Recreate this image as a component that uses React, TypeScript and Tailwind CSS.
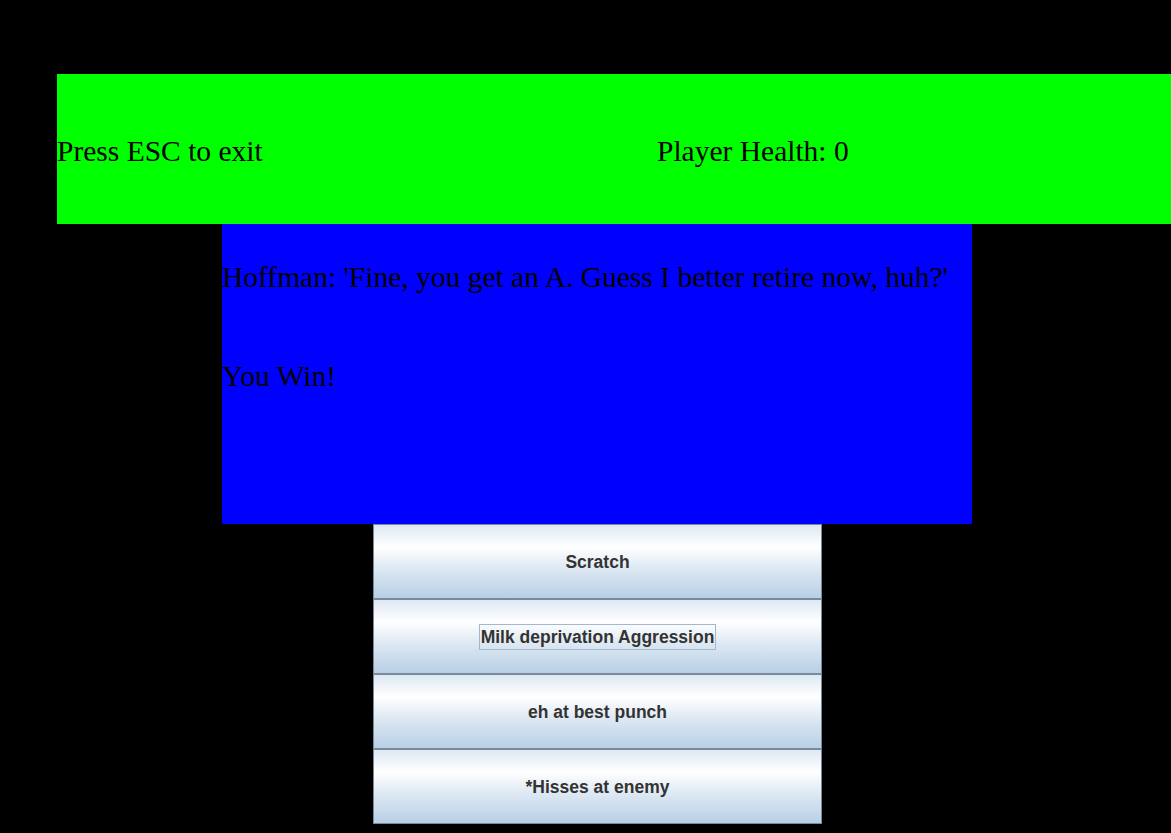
import React from 'react';

const moves = ['Scratch', 'Milk deprivation Aggression', 'eh at best punch', '*Hisses at enemy'];

function MoveButton({ label, focused }: { label: string; focused?: boolean }) {
  return (
    <button
      className="h-[75px] w-full border border-[#7a8a99] bg-[linear-gradient(to_bottom,#dde8f3_0%,#ffffff_30%,#dde8f3_60%,#b8cfe5_100%)] flex items-center justify-center"
    >
      <span
        className={
          focused
            ? "border border-[#a3b8cc] px-[1px] text-[17.5px] leading-[24px] font-bold text-[#333333] font-['Liberation_Sans',Arial,sans-serif]"
            : "border border-transparent px-[1px] text-[17.5px] leading-[24px] font-bold text-[#333333] font-['Liberation_Sans',Arial,sans-serif]"
        }
      >
        {label}
      </span>
    </button>
  );
}

export default function App() {
  return (
    <div className="w-[1171px] h-[833px] bg-black overflow-hidden pt-[74px] font-['Liberation_Serif','Times_New_Roman',serif] text-black">
      {/* status bar */}
      <div className="ml-[57px] w-[1200px] h-[150px] bg-[#00ff00] grid grid-cols-2 items-center text-[29.5px] leading-[34px] pt-[3px]">
        <span>Press ESC to exit</span>
        <span>Player Health: 0</span>
      </div>

      {/* dialogue */}
      <div className="ml-[222px] w-[750px] h-[300px] bg-[#0000ff] grid grid-rows-3 items-center text-[29.5px] leading-[34px] pt-[3px] whitespace-nowrap">
        <span>Hoffman: 'Fine, you get an A. Guess I better retire now, huh?'</span>
        <span>You Win!</span>
        <span></span>
      </div>

      {/* moves */}
      <div className="ml-[373px] w-[449px] flex flex-col">
        {moves.map((m, i) => (
          <MoveButton key={m} label={m} focused={i === 1} />
        ))}
      </div>
    </div>
  );
}
